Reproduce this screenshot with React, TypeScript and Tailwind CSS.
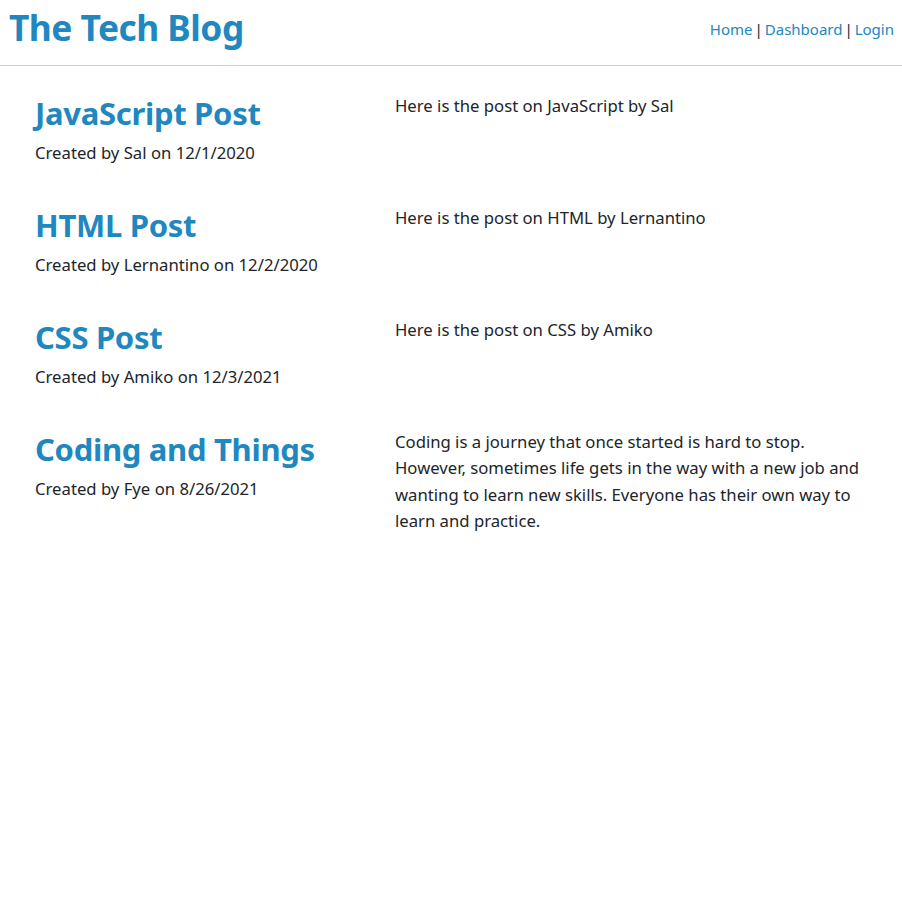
import React from 'react';

const posts = [
  {
    title: 'JavaScript Post',
    author: 'Sal',
    date: '12/1/2020',
    body: 'Here is the post on JavaScript by Sal',
  },
  {
    title: 'HTML Post',
    author: 'Lernantino',
    date: '12/2/2020',
    body: 'Here is the post on HTML by Lernantino',
  },
  {
    title: 'CSS Post',
    author: 'Amiko',
    date: '12/3/2021',
    body: 'Here is the post on CSS by Amiko',
  },
  {
    title: 'Coding and Things',
    author: 'Fye',
    date: '8/26/2021',
    body: 'Coding is a journey that once started is hard to stop. However, sometimes life gets in the way with a new job and wanting to learn new skills. Everyone has their own way to learn and practice.',
  },
];

export default function App() {
  return (
    <div className="min-h-screen bg-white text-[#212529] font-['Noto_Sans',sans-serif]">
      <header className="flex items-center justify-between h-[66px] pl-[9px] pr-[8px] border-b border-[#d0d0d0]">
        <h1 className="text-[35.3px] font-bold text-[#2087bf] leading-none -mt-[10px] tracking-[-0.5px]">The Tech Blog</h1>
        <nav className="text-[15px] -mt-[6px]">
          <a href="#" className="text-[#2087bf]">Home</a>
          <span className="mx-[2px]">|</span>
          <a href="#" className="text-[#2087bf]">Dashboard</a>
          <span className="mx-[2px]">|</span>
          <a href="#" className="text-[#2087bf]">Login</a>
        </nav>
      </header>

      <main className="pt-[26px] pl-[35px] pr-[30px]">
        {posts.map((post) => (
          <article key={post.title} className="grid grid-cols-[360px_1fr] h-[112px]">
            <div>
              <h2 className="text-[31px] font-bold text-[#2087bf] leading-[42px] tracking-[-0.3px]">{post.title}</h2>
              <p className="text-[16.7px] leading-[26px] mt-[6px]">
                Created by {post.author} on {post.date}
              </p>
            </div>
            <p className="text-[16.7px] leading-[26.3px] pt-[1px] max-w-[465px]">{post.body}</p>
          </article>
        ))}
      </main>
    </div>
  );
}
